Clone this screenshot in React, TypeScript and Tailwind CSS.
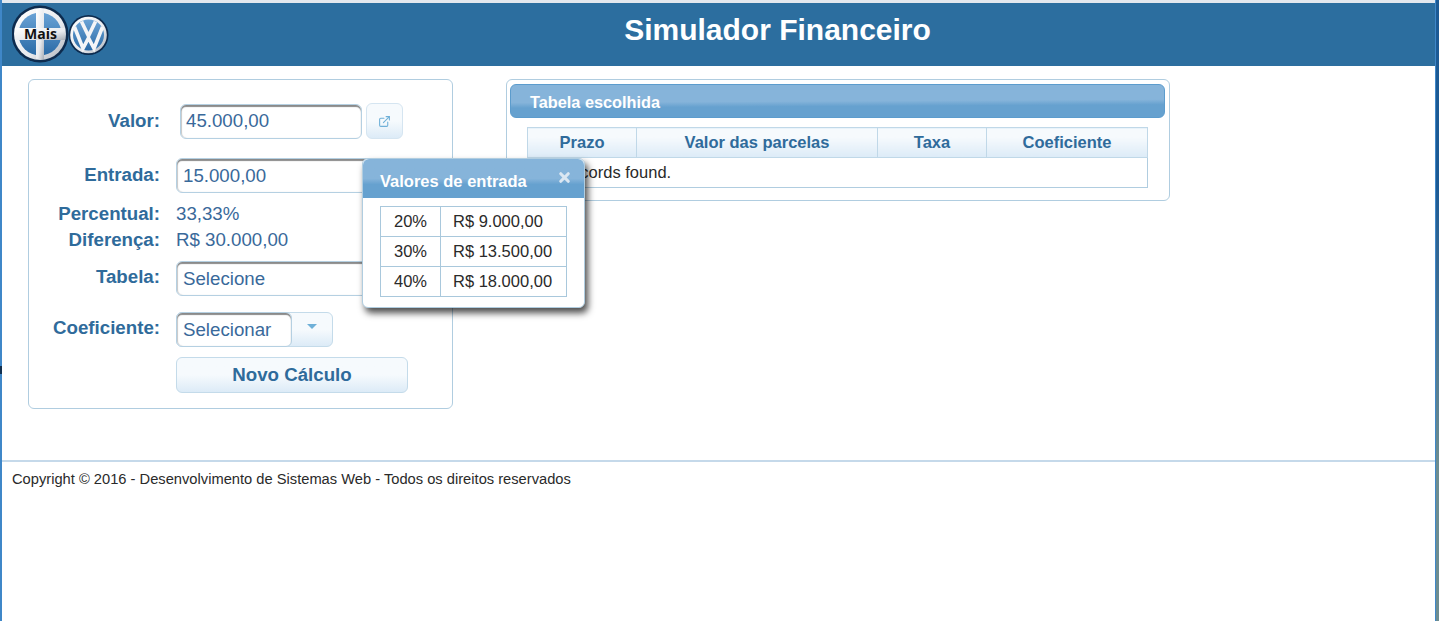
import { ExternalLink, X } from 'lucide-react'

const percentuais = [
    ['20%', 'R$ 9.000,00'],
    ['30%', 'R$ 13.500,00'],
    ['40%', 'R$ 18.000,00'],
]

const colunas = [
    ['Prazo', 'w-[109px]'],
    ['Valor das parcelas', 'w-[241px]'],
    ['Taxa', 'w-[109px]'],
    ['Coeficiente', 'w-[161px]'],
]

function Logos() {
    return (
        <svg width="100" height="63" viewBox="0 0 100 63" className="shrink-0">
            <defs>
                <linearGradient id="ring" x1="0" y1="0" x2="1" y2="1">
                    <stop offset="0" stopColor="#ffffff" />
                    <stop offset="0.6" stopColor="#e8eaee" />
                    <stop offset="1" stopColor="#a9afb8" />
                </linearGradient>
                <linearGradient id="azul" x1="0" y1="0" x2="0" y2="1">
                    <stop offset="0" stopColor="#6aa3d6" />
                    <stop offset="1" stopColor="#2a6aa6" />
                </linearGradient>
            </defs>
            {/* Mais */}
            <circle cx="28" cy="31" r="28.5" fill="#0d2b4e" />
            <circle cx="28" cy="31" r="26" fill="url(#ring)" />
            <circle cx="28" cy="31" r="21.5" fill="url(#azul)" />
            <rect x="24" y="6" width="8" height="50" fill="url(#ring)" />
            <rect x="3" y="25" width="50" height="12" fill="url(#ring)" />
            <text x="28.5" y="36" textAnchor="middle" fontSize="14" fontWeight="700" fill="#111" fontFamily="'Open Sans', sans-serif">
                Mais
            </text>
            {/* VW */}
            <circle cx="76.5" cy="32" r="20" fill="#0d2b4e" />
            <circle cx="76.5" cy="32" r="18.3" fill="url(#ring)" />
            <circle cx="76.5" cy="32" r="15.5" fill="url(#azul)" />
            <path
                d="M69.5 18.5 L76.5 33 L83.5 18.5 M62.5 24 L71 45.5 L76.5 35 L82 45.5 L90.5 24"
                fill="none"
                stroke="#f4f5f7"
                strokeWidth="3.6"
            />
        </svg>
    )
}

function CampoTexto({ children, className }: { children: React.ReactNode; className: string }) {
    return (
        <div className={`flex h-[35px] items-center rounded-md border border-[#b5d0e2] bg-white pt-[1px] text-[18.7px] text-[#39699a] shadow-[inset_0_2px_1px_#8a8a8a,inset_1px_0_1px_#cfcfcf] ${className}`}>
            {children}
        </div>
    )
}

function Rotulo({ children, className = 'pb-[2px]' }: { children: React.ReactNode; className?: string }) {
    return <span className={`w-[131px] shrink-0 text-right text-[18.7px] font-bold text-[#2f6b9b] ${className}`}>{children}</span>
}

export default function App() {
    return (
        <div className="relative flex h-[621px] w-[1439px] overflow-hidden bg-white font-['Liberation_Sans',Arial,sans-serif]">
            <div className="flex min-w-0 flex-1 flex-col border-r border-l-2 border-[#3f87c8] pt-[3px] shadow-[inset_0_3px_0_#e3e8ee]">
                <header className="flex h-[63px] items-center bg-[#2c6e9f] pl-[10px] text-white">
                    <Logos />
                    <h1 className="flex-1 pb-[10px] pl-[8px] text-center text-[30px] font-bold">Simulador Financeiro</h1>
                </header>

                <div className="flex h-[394px] items-start pt-[13px] pl-[26px]">
                    <section className="h-[330px] w-[425px] shrink-0 rounded-md border border-[#b0cde0] pt-[23px]">
                        <div className="flex h-[36px] items-center gap-4">
                            <Rotulo className="">Valor:</Rotulo>
                            <CampoTexto className="ml-[4px] w-[182px] pl-[5px]">45.000,00</CampoTexto>
                            <button className="ml-[-12px] flex h-[36px] w-[37px] items-center justify-center rounded-md border border-[#d5e5f1] bg-linear-to-b from-[#f6fafd] from-50% to-[#dcebf7] text-[#6fb0d8]">
                                <ExternalLink size={13} />
                            </button>
                        </div>
                        <div className="mt-[19px] flex h-[35px] items-center gap-4">
                            <Rotulo className="">Entrada:</Rotulo>
                            <CampoTexto className="w-[232px] pl-[6px]">15.000,00</CampoTexto>
                        </div>
                        <div className="mt-[8px] flex h-[26px] items-center gap-4">
                            <Rotulo className="pt-[1px]">Percentual:</Rotulo>
                            <span className="text-[18.7px] text-[#39699a]">33,33%</span>
                        </div>
                        <div className="flex h-[26px] items-center gap-4">
                            <Rotulo className="pt-[1px]">Diferença:</Rotulo>
                            <span className="text-[18.7px] text-[#39699a]">R$ 30.000,00</span>
                        </div>
                        <div className="mt-[8px] flex h-[35px] items-center gap-4">
                            <Rotulo>Tabela:</Rotulo>
                            <CampoTexto className="w-[232px] pl-[6px]">Selecione</CampoTexto>
                        </div>
                        <div className="mt-[16px] flex h-[35px] items-center gap-4">
                            <Rotulo>Coeficiente:</Rotulo>
                            <div className="flex h-[35px] w-[157px] rounded-md border border-[#c4dbea] bg-linear-to-b from-[#f6fafd] from-50% to-[#dcebf7]">
                                <CampoTexto className="-my-px -ml-px w-[116px] pl-[6px]">Selecionar</CampoTexto>
                                <div className="flex flex-1 justify-center pt-[11px]">
                                    <span className="h-0 w-0 border-x-[5px] border-t-[5px] border-x-transparent border-t-[#6fb0d8]" />
                                </div>
                            </div>
                        </div>
                        <div className="mt-[10px] flex gap-4">
                            <span className="w-[131px] shrink-0" />
                            <button className="h-[36px] w-[232px] rounded-md border border-[#c4dbea] bg-linear-to-b from-[#f6fafd] from-50% to-[#dcebf7] text-[18.7px] font-bold text-[#2f6b9b]">
                                Novo Cálculo
                            </button>
                        </div>
                    </section>

                    <section className="ml-[53px] h-[122px] w-[664px] shrink-0 rounded-md border border-[#b0cde0] pt-[4px] pr-[4px] pl-[3px]">
                        <div className="flex h-[34px] items-center rounded-md border border-[#5c9ccd] bg-[linear-gradient(179.7deg,#86b4da_50%,#66a1cf_65%)] pt-[2px] pl-[19px] text-[16.3px] font-bold text-white">
                            Tabela escolhida
                        </div>
                        <table className="mt-[9px] ml-[17px] w-[620px] table-fixed border-collapse text-[16.5px]">
                            <thead>
                                <tr className="h-[30px]">
                                    {colunas.map(([nome, largura]) => (
                                        <th key={nome} className={`${largura} border border-[#c0d8e8] bg-linear-to-b from-[#f6fafd] from-30% to-[#dcebf7] font-bold text-[#2f6b9b]`}>
                                            {nome}
                                        </th>
                                    ))}
                                </tr>
                            </thead>
                            <tbody>
                                <tr className="h-[30px]">
                                    <td colSpan={4} className="border border-[#b0cde0] pl-[12px] text-[#2a2a2a]">
                                        No records found.
                                    </td>
                                </tr>
                            </tbody>
                        </table>
                    </section>
                </div>

                <footer className="flex-1 border-t-[2px] border-[#c5d9ea] pt-[6px] pl-[10px] text-[14.7px] text-[#2a2a2a]">
                    Copyright © 2016 - Desenvolvimento de Sistemas Web - Todos os direitos reservados
                </footer>
            </div>
            {/* pedaco do desktop atras da janela */}
            <div className="w-[3px] shrink-0 bg-linear-to-b from-[#1c5a94] from-30% to-[#6e8d90] to-75%" />

            <div className="absolute top-[366px] left-0 h-[8px] w-[2px] bg-[#12304f]" />

            {/* dialogo sobre o formulario */}
            <div className="absolute top-[158px] left-[362px] h-[150px] w-[223px] rounded-md border border-[#b0cde0] bg-white shadow-[3px_5px_7px_rgba(0,0,0,0.7)]">
                <div className="flex h-[39px] items-center justify-between rounded-t-md bg-linear-to-b from-[#86b4da] from-50% to-[#66a1cf] to-65% pr-[12px] pl-[17px] text-[16.5px] font-bold text-white">
                    <span className="pt-[5px]">Valores de entrada</span>
                    <X size={15} strokeWidth={5} className="mb-[3px] text-[#dbe7f2]" />
                </div>
                <table className="mt-[8px] ml-[17px] w-[187px] table-fixed border-collapse text-[16.5px] text-[#2a2a2a]">
                    <tbody>
                        {percentuais.map(([pct, valor]) => (
                            <tr key={pct} className="h-[30px]">
                                <td className="w-[60px] border border-[#a9c8dc] text-center">{pct}</td>
                                <td className="border border-[#a9c8dc] pl-[12px]">{valor}</td>
                            </tr>
                        ))}
                    </tbody>
                </table>
            </div>
        </div>
    )
}
